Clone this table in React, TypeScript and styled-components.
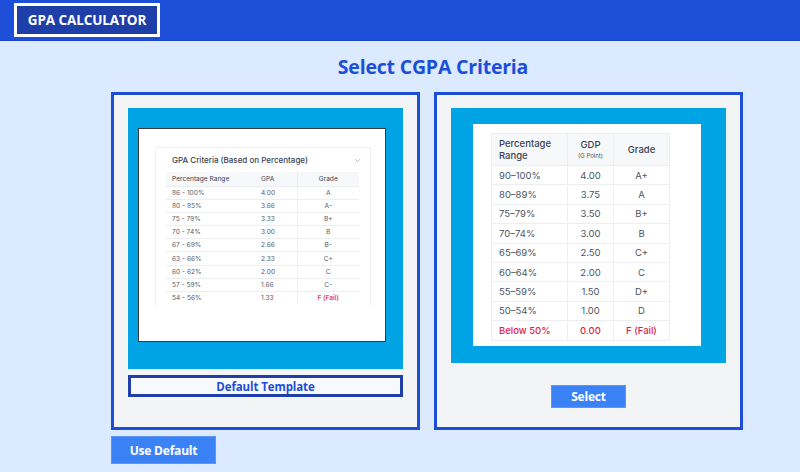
import React from "react";
import styled, { createGlobalStyle } from "styled-components";

const Global = createGlobalStyle`
  html, body { margin: 0; padding: 0; }
  body {
    background: #dbeafe;
    font-family: "Open Sans", "Noto Sans", sans-serif;
    width: 800px;
    height: 472px;
    overflow: hidden;
  }
  * { box-sizing: border-box; }
`;

const Header = styled.header`
  height: 41px;
  background: #1e4fd8;
  border-bottom: 1px solid #1b45c4;
  display: flex;
  align-items: flex-start;
  padding: 3px 0 0 14px;
`;

const Brand = styled.div`
  width: 146px;
  height: 34px;
  border: 3px solid #ffffff;
  background: #1e3ea8;
  color: #ffffff;
  font-weight: 700;
  font-size: 13.5px;
  letter-spacing: -0.1px;
  display: flex;
  align-items: center;
  justify-content: center;
`;

const Main = styled.main`
  padding-left: 111px;
`;

const Title = styled.h1`
  width: 644px;
  margin: 0;
  padding-top: 12px;
  height: 51px;
  text-align: center;
  color: #1d4ed8;
  font-size: 19.5px;
  font-weight: 700;
  letter-spacing: -0.2px;
`;

const Grid = styled.div`
  display: grid;
  grid-template-columns: 309px 309px;
  column-gap: 14px;
  align-items: stretch;
`;

const Card = styled.section`
  height: 338px;
  border: 3px solid #1d4ed8;
  background: #f3f4f6;
  padding: 13px 14px 0 14px;
  display: flex;
  flex-direction: column;
`;

const Frame = styled.div<{ $h: number; $pad: string }>`
  height: ${(p) => p.$h}px;
  background: #00a3e4;
  padding: ${(p) => p.$pad};
  display: flex;
`;

const Shot = styled.div<{ $bordered?: boolean; $pad: string }>`
  flex: 1;
  background: #ffffff;
  border: ${(p) => (p.$bordered ? "1px solid #3a3a3a" : "none")};
  padding: ${(p) => p.$pad};
  font-family: Inter, "Noto Sans", sans-serif;
  color: #4b5563;
`;

const MiniCard = styled.div`
  border: 1px solid #f0f1f3;
  border-bottom: none;
  height: 159px;
  padding: 0 11px 0 10px;
`;

const MiniHead = styled.div`
  height: 24px;
  display: flex;
  align-items: center;
  justify-content: space-between;
  padding: 0 0 0 6px;
  margin-right: -2px;
  font-size: 8px;
  font-weight: 500;
  color: #374151;
`;

const Table = styled.table<{ $cols: number[] }>`
  border-collapse: collapse;
  table-layout: fixed;
  width: ${(p) => p.$cols.reduce((a, b) => a + b, 0)}px;
`;

const SmallTh = styled.th<{ $center?: boolean; $divider?: boolean }>`
  height: 14.5px;
  padding: 0 0 0 6px;
  background: #f7f8fa;
  font-size: 6.6px;
  font-weight: 400;
  color: #374151;
  text-align: ${(p) => (p.$center ? "center" : "left")};
  padding-left: ${(p) => (p.$center ? 0 : 6)}px;
  border-left: ${(p) => (p.$divider ? "1px solid #e9ebee" : "none")};
`;

const SmallTd = styled.td<{ $center?: boolean; $red?: boolean; $divider?: boolean }>`
  height: 13.1px;
  padding: 0;
  padding-left: ${(p) => (p.$center ? 0 : 6)}px;
  font-size: 6.6px;
  font-weight: ${(p) => (p.$red ? 600 : 400)};
  color: ${(p) => (p.$red ? "#ef4444" : "#555b66")};
  text-align: ${(p) => (p.$center ? "center" : "left")};
  border-top: 1px solid #eceef1;
  border-left: ${(p) => (p.$divider ? "1px solid #eceef1" : "none")};
  white-space: nowrap;
`;

const BigTh = styled.th<{ $center?: boolean }>`
  height: 32px;
  padding: 0 0 0 ${(p) => (p.$center ? 0 : 7)}px;
  background: #f7f8fa;
  font-size: 9.5px;
  font-weight: 500;
  line-height: 12px;
  color: #374151;
  text-align: ${(p) => (p.$center ? "center" : "left")};
  border: 1px solid #eceef1;
`;

const Sub = styled.div`
  font-size: 6px;
  font-weight: 400;
  line-height: 9px;
  color: #4b5563;
`;

const BigTd = styled.td<{ $center?: boolean; $red?: boolean }>`
  height: 19.4px;
  padding: 0 0 0 ${(p) => (p.$center ? 0 : 7)}px;
  font-size: 9.5px;
  font-weight: ${(p) => (p.$red ? 500 : 400)};
  color: ${(p) => (p.$red ? "#e11d48" : "#4b5563")};
  text-align: ${(p) => (p.$center ? "center" : "left")};
  border: 1px solid #eceef1;
  white-space: nowrap;
`;

const OutlineButton = styled.button`
  margin-top: 6px;
  height: 22px;
  border: 3px solid #1e3ea8;
  background: #f8f9fb;
  color: #1d4ed8;
  font-family: "Open Sans", "Noto Sans", sans-serif;
  font-weight: 700;
  font-size: 11.5px;
  letter-spacing: -0.1px;
  padding: 0;
  display: flex;
  align-items: center;
  justify-content: center;
`;

const SolidButton = styled.button<{ $w: number; $h: number }>`
  width: ${(p) => p.$w}px;
  height: ${(p) => p.$h}px;
  background: #3b82f6;
  color: #ffffff;
  border: 1px solid #5b95f5;
  font-family: "Open Sans", "Noto Sans", sans-serif;
  font-weight: 700;
  font-size: 12px;
  letter-spacing: -0.2px;
  padding: 0;
  display: flex;
  align-items: center;
  justify-content: center;
`;

const Center = styled.div`
  display: flex;
  justify-content: center;
  padding-top: 22px;
`;

const Footer = styled.div`
  padding-top: 6px;
`;

const Chevron = () => (
  <svg width="7" height="5" viewBox="0 0 7 5" fill="none">
    <path d="M1 1.2 L3.5 3.7 L6 1.2" stroke="#9ca3af" strokeWidth="0.8" />
  </svg>
);

const leftRows: [string, string, string, boolean?][] = [
  ["86 - 100%", "4.00", "A"],
  ["80 - 85%", "3.66", "A-"],
  ["75 - 79%", "3.33", "B+"],
  ["70 - 74%", "3.00", "B"],
  ["67 - 69%", "2.66", "B-"],
  ["63 - 66%", "2.33", "C+"],
  ["60 - 62%", "2.00", "C"],
  ["57 - 59%", "1.66", "C-"],
  ["54 - 56%", "1.33", "F (Fail)", true],
];

const rightRows: [string, string, string, boolean?][] = [
  ["90–100%", "4.00", "A+"],
  ["80–89%", "3.75", "A"],
  ["75–79%", "3.50", "B+"],
  ["70–74%", "3.00", "B"],
  ["65–69%", "2.50", "C+"],
  ["60–64%", "2.00", "C"],
  ["55–59%", "1.50", "D+"],
  ["50–54%", "1.00", "D"],
  ["Below 50%", "0.00", "F (Fail)", true],
];

const leftCols = [89, 42, 62];
const rightCols = [76, 46, 56];

export default function App() {
  return (
    <>
      <Global />
      <Header>
        <Brand>GPA CALCULATOR</Brand>
      </Header>
      <Main>
        <Title>Select CGPA Criteria</Title>
        <Grid>
          <Card>
            <Frame $h={261} $pad="20px 17px 27px 10px">
              <Shot $bordered $pad="18px 14px 0 16px">
                <MiniCard>
                  <MiniHead>
                    <span>GPA Criteria (Based on Percentage)</span>
                    <Chevron />
                  </MiniHead>
                  <Table $cols={leftCols}>
                    <colgroup>
                      {leftCols.map((w, i) => (
                        <col key={i} style={{ width: w }} />
                      ))}
                    </colgroup>
                    <thead>
                      <tr>
                        <SmallTh>Percentage Range</SmallTh>
                        <SmallTh>GPA</SmallTh>
                        <SmallTh $center $divider>
                          Grade
                        </SmallTh>
                      </tr>
                    </thead>
                    <tbody>
                      {leftRows.map(([r, g, gr, red]) => (
                        <tr key={r}>
                          <SmallTd>{r}</SmallTd>
                          <SmallTd>{g}</SmallTd>
                          <SmallTd $center $divider $red={red}>
                            {gr}
                          </SmallTd>
                        </tr>
                      ))}
                    </tbody>
                  </Table>
                </MiniCard>
              </Shot>
            </Frame>
            <OutlineButton>Default Template</OutlineButton>
          </Card>
          <Card>
            <Frame $h={255} $pad="16px 25px 17px 22px">
              <Shot $pad="9px 0 0 18px">
                <Table $cols={rightCols}>
                  <colgroup>
                    {rightCols.map((w, i) => (
                      <col key={i} style={{ width: w }} />
                    ))}
                  </colgroup>
                  <thead>
                    <tr>
                      <BigTh>
                        Percentage
                        <br />
                        Range
                      </BigTh>
                      <BigTh $center>
                        GDP
                        <Sub>(G Point)</Sub>
                      </BigTh>
                      <BigTh $center>Grade</BigTh>
                    </tr>
                  </thead>
                  <tbody>
                    {rightRows.map(([r, g, gr, red]) => (
                      <tr key={r}>
                        <BigTd $red={red}>{r}</BigTd>
                        <BigTd $center $red={red}>
                          {g}
                        </BigTd>
                        <BigTd $center $red={red}>
                          {gr}
                        </BigTd>
                      </tr>
                    ))}
                  </tbody>
                </Table>
              </Shot>
            </Frame>
            <Center>
              <SolidButton $w={75} $h={23}>
                Select
              </SolidButton>
            </Center>
          </Card>
        </Grid>
        <Footer>
          <SolidButton $w={105} $h={28}>
            Use Default
          </SolidButton>
        </Footer>
      </Main>
    </>
  );
}
